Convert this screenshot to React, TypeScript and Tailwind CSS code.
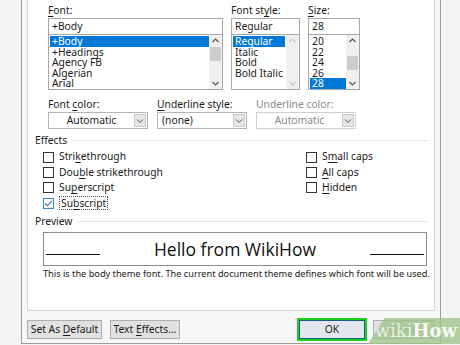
import type { ReactNode } from "react";

// Word "Font" dialog — lower part, with wikiHow watermark

const fontList = ["+Body", "+Headings", "Agency FB", "Algerian", "Arial"];
const styleList = ["Regular", "Italic", "Bold", "Bold Italic"];
const sizeList = ["20", "22", "24", "26", "28"];

function Key({ children }: { children: ReactNode }) {
  return <span className="underline underline-offset-2">{children}</span>;
}

function Scrollbar({ disabled, thumbTop }: { disabled?: boolean; thumbTop?: string }) {
  const c = disabled ? "#c8c8c8" : "#555";
  return (
    <div className="flex w-[13px] flex-col items-center bg-[#f0f0f0]">
      <svg width="9" height="11" viewBox="0 0 9 11" className="shrink-0">
        <path d="M1.5 7 L4.5 4 L7.5 7" fill="none" stroke={c} strokeWidth="1.2" />
      </svg>
      <div className="w-full flex-1 px-[1px]">
        {thumbTop && <div className={`${thumbTop} h-[14px] w-full bg-[#cdcdcd]`} />}
      </div>
      <svg width="9" height="11" viewBox="0 0 9 11" className="shrink-0">
        <path d="M1.5 4 L4.5 7 L7.5 4" fill="none" stroke={c} strokeWidth="1.2" />
      </svg>
    </div>
  );
}

function Combo({ value, width, disabled, center }: { value: string; width: string; disabled?: boolean; center?: boolean }) {
  return (
    <div className={`flex h-[17px] ${width} border ${disabled ? "border-[#cfcfcf]" : "border-[#b4b4b4]"} bg-white`}>
      <div className={`flex flex-1 items-center ${center ? "justify-center" : "pl-[4px]"} ${disabled ? "text-[#8a8a8a]" : "text-[#1a1a1a]"}`}>
        {value}
      </div>
      <div className="my-[1px] mr-[1px] flex w-[12px] items-center justify-center border border-[#c8c8c8] bg-[#e6e6e6]">
        <svg width="8" height="6" viewBox="0 0 8 6">
          <path d="M1 1.5 L4 4.5 L7 1.5" fill="none" stroke="#555" strokeWidth="1" />
        </svg>
      </div>
    </div>
  );
}

function Check({ label, checked }: { label: ReactNode; checked?: boolean }) {
  return (
    <div className="flex h-[15.4px] items-center gap-[5px]">
      <div
        className={`flex h-[11px] w-[11px] items-center justify-center border ${checked ? "border-[#2a8cc4]" : "border-[#333]"} bg-white`}
      >
        {checked && (
          <svg width="9" height="9" viewBox="0 0 9 9">
            <path d="M1.2 4.5 L3.5 6.8 L7.8 1.8" fill="none" stroke="#1e6fa8" strokeWidth="1.1" />
          </svg>
        )}
      </div>
      <span className={checked ? "border border-dotted border-[#555] px-[1px] leading-[12px]" : ""}>{label}</span>
    </div>
  );
}

function GroupTitle({ children }: { children: ReactNode }) {
  return (
    <div className="flex items-center gap-[6px] text-[#1a1a1a]">
      <span>{children}</span>
      <div className="h-px flex-1 bg-[#e3e3e3]" />
    </div>
  );
}

function ListBox({ items, selected, width, sel, disabled, thumbTop }: {
  items: string[]; selected: number; width: string; sel: string; disabled?: boolean; thumbTop?: string;
}) {
  return (
    <div className={`flex h-[55px] ${width} border-x border-b border-[#a8a8a8]`}>
      <div className="flex flex-1 flex-col overflow-hidden pl-[1px] pt-[1px]">
        {items.map((f, i) => (
          <div
            key={f}
            className={`h-[10.6px] whitespace-nowrap pl-[2px] leading-[10.6px] ${i === selected ? `${sel} bg-[#0078d7] text-white` : ""}`}
          >
            {f}
          </div>
        ))}
      </div>
      <Scrollbar disabled={disabled} thumbTop={thumbTop} />
    </div>
  );
}

export default function App() {
  return (
    <div
      className="flex h-[345px] w-[460px] overflow-hidden bg-[#f4f4f4] text-[10.3px] text-[#1a1a1a]"
      style={{ fontFamily: '"Noto Sans", "Open Sans", sans-serif' }}
    >
      <div className="relative ml-[21px] flex h-[344px] w-[420px] flex-col border-x border-b border-[#9c9c9c] bg-[#f7f7f7]">
        {/* main panel */}
        <div className="mx-[5px] flex h-[311px] flex-col border-x border-b border-[#d6d6d6] bg-white pl-[7px] pr-[5px]">
          {/* font / style / size */}
          <div className="ml-[13px] mt-[3px] flex gap-[8px]">
            <div className="flex w-[175px] flex-col">
              <div className="h-[15px] leading-[15px]"><Key>F</Key>ont:</div>
              <div className="flex h-[17px] items-center border border-[#a8a8a8] pl-[3px]">+Body</div>
              <ListBox items={fontList} selected={0} width="w-full" sel="" thumbTop="mt-[1px]" />
            </div>
            <div className="flex w-[69px] flex-col">
              <div className="h-[15px] leading-[15px]">Font st<Key>y</Key>le:</div>
              <div className="flex h-[17px] items-center border border-[#a8a8a8] pl-[3px]">Regular</div>
              <ListBox items={styleList} selected={0} width="w-full" sel="w-[52px]" disabled />
            </div>
            <div className="flex w-[52px] flex-col">
              <div className="h-[15px] leading-[15px]"><Key>S</Key>ize:</div>
              <div className="flex h-[17px] items-center border border-[#a8a8a8] pl-[3px]">28</div>
              <ListBox items={sizeList} selected={4} width="w-full" sel="" thumbTop="mt-[10px]" />
            </div>
          </div>

          {/* colours */}
          <div className="ml-[13px] mt-[7px] flex gap-[9px]">
            <div className="flex flex-col">
              <div className="h-[15px] leading-[15px]">Font <Key>c</Key>olor:</div>
              <Combo value="Automatic" width="w-[100px]" center />
            </div>
            <div className="flex flex-col">
              <div className="h-[15px] leading-[15px]"><Key>U</Key>nderline style:</div>
              <Combo value="(none)" width="w-[90px]" />
            </div>
            <div className="flex flex-col">
              <div className="h-[15px] leading-[15px] text-[#8a8a8a]">Underline color:</div>
              <Combo value="Automatic" width="w-[100px]" disabled center />
            </div>
          </div>

          {/* effects */}
          <div className="mt-[4px] pr-[1px]">
            <GroupTitle>Effects</GroupTitle>
          </div>
          <div className="ml-[8px] mt-[1px] flex">
            <div className="flex w-[263px] flex-col">
              <Check label={<>Stri<Key>k</Key>ethrough</>} />
              <Check label={<>Dou<Key>b</Key>le strikethrough</>} />
              <Check label={<>Su<Key>p</Key>erscript</>} />
              <Check label={<>Su<Key>b</Key>script</>} checked />
            </div>
            <div className="flex flex-col">
              <Check label={<>S<Key>m</Key>all caps</>} />
              <Check label={<><Key>A</Key>ll caps</>} />
              <Check label={<><Key>H</Key>idden</>} />
            </div>
          </div>

          {/* preview */}
          <div className="mt-[3px] pr-[1px]">
            <GroupTitle>Preview</GroupTitle>
          </div>
          <div className="ml-[8px] mr-[2px] mt-[3px] flex h-[34px] items-center border border-[#8c8c8c] px-[2px]">
            <div className="mt-[10px] h-px w-[54px] bg-[#111]" />
            <div className="flex-1 text-center text-[17.5px] leading-[20px] text-[#111]" style={{ fontFamily: '"Open Sans", "Noto Sans", sans-serif' }}>
              Hello from WikiHow
            </div>
            <div className="mt-[10px] h-px w-[54px] bg-[#111]" />
          </div>
          <div className="ml-[8px] mt-[1px] whitespace-nowrap text-[9.2px] text-[#222]">
            This is the body theme font. The current document theme defines which font will be used.
          </div>
        </div>

        {/* buttons */}
        <div className="mt-[7px] flex items-center pl-[5px] pr-[5px]">
          <div className="flex h-[19px] w-[75px] items-center justify-center border border-[#adadad] bg-[#e1e1e1]">
            <span>Set As <Key>D</Key>efault</span>
          </div>
          <div className="ml-[8px] flex h-[19px] w-[70px] items-center justify-center border border-[#adadad] bg-[#e1e1e1]">
            <span>Text <Key>E</Key>ffects...</span>
          </div>
          <div className="ml-auto flex h-[23px] w-[70px] items-center justify-center border-[2px] border-[#1cd31c] bg-[#1cd31c]">
            <div className="flex h-[19px] w-[66px] items-center justify-center border border-[#1a5a8a] bg-[#e3e6ee]">OK</div>
          </div>
          <div className="ml-[6px] flex h-[19px] w-[62px] items-center justify-center border border-[#adadad] bg-[#e1e1e1] text-[#888]">
            Cancel
          </div>
        </div>

        {/* wikiHow watermark */}
        <div
          className="absolute bottom-[-1px] right-[-20px] flex h-[26px] w-[92px] items-center justify-end bg-[#9fc48a]/80 pr-[3px]"
          style={{ clipPath: "polygon(18% 0, 100% 0, 100% 100%, 0 100%)" }}
        >
          <span className="text-[18px] font-bold leading-none text-white/90" style={{ fontFamily: '"DejaVu Serif", "Liberation Serif", serif' }}>
            <span className="font-normal text-white/75">wiki</span>How
          </span>
        </div>
      </div>
    </div>
  );
}
